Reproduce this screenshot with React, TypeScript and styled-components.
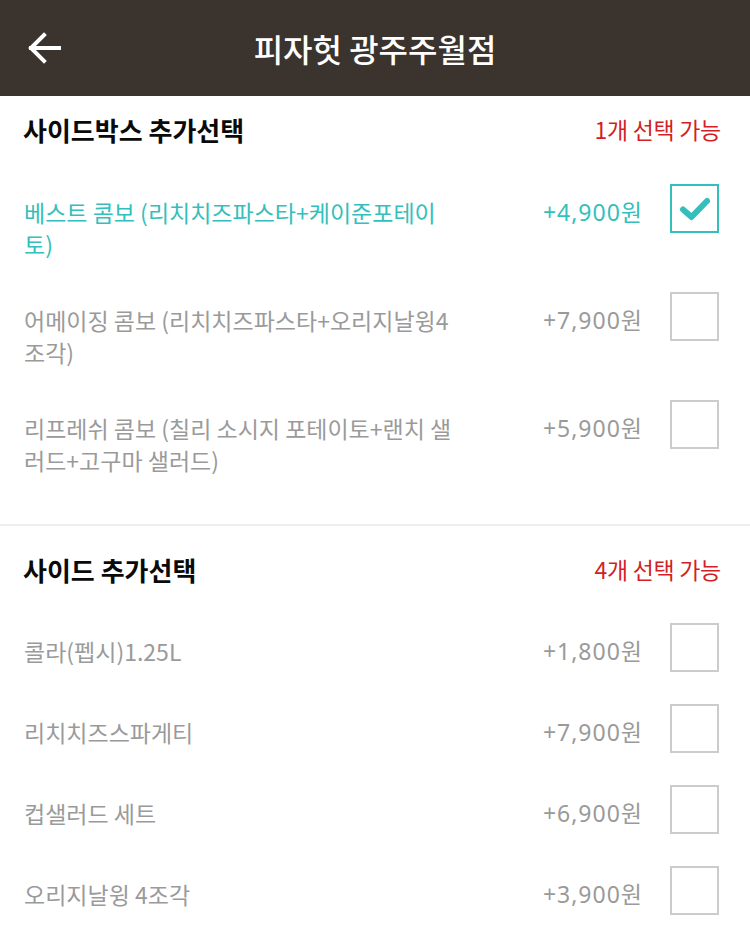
import React from "react";
import styled, {createGlobalStyle} from "styled-components";

const GlobalStyle = createGlobalStyle`
  html, body {
    margin: 0;
    padding: 0;
    background: #ffffff;
  }
  body {
    font-family: "Noto Sans CJK KR", "Noto Sans", sans-serif;
    -webkit-font-smoothing: antialiased;
  }
`;

const Page = styled.div`
  width: 750px;
  min-height: 945px;
  background: #ffffff;
`;

const TopBar = styled.header`
  height: 96px;
  background-color: #3b342e;
  display: flex;
  align-items: center;
  justify-content: center;
  position: relative;
`;

const BackButton = styled.button`
  position: absolute;
  left: 20px;
  top: 24px;
  width: 48px;
  height: 48px;
  padding: 0;
  border: none;
  background: transparent;
  display: flex;
  align-items: center;
  justify-content: center;
`;

const Title = styled.h1`
  margin: 0;
  color: #ffffff;
  font-size: 32px;
  font-weight: 500;
`;

const Section = styled.section<{$divided?: boolean}>`
  padding: ${(p) => (p.$divided ? "25px" : "15px")} 31px 48px 23px;
  border-top: ${(p) => (p.$divided ? "2px solid #eeeeee" : "none")};
  display: flex;
  flex-direction: column;
  gap: 32px;
`;

const SectionHeader = styled.div<{$tight?: boolean}>`
  display: flex;
  align-items: center;
  justify-content: space-between;
  height: 36px;
  margin-right: -2px;
  margin-bottom: ${(p) => (p.$tight ? "4px" : "5px")};
`;

const SectionTitle = styled.h2`
  margin: 0;
  font-size: 26px;
  font-weight: 700;
  color: #0a0a0a;
`;

const Limit = styled.span`
  font-size: 23px;
  color: #d21f26;
  letter-spacing: -0.3px;
`;

const Row = styled.div<{$selected?: boolean}>`
  display: flex;
  align-items: flex-start;
  padding-left: 1px;
  color: ${(p) => (p.$selected ? "#34bfbc" : "#9a9a9a")};
`;

const Name = styled.div`
  flex: 1;
  padding-top: 12px;
  font-size: 23px;
  line-height: 32px;
  white-space: pre-line;
`;

const Price = styled.div`
  padding-top: 12px;
  margin-right: 27px;
  font-size: 23px;
  line-height: 32px;
  letter-spacing: 1px;
  font-family: "Noto Sans", "Noto Sans CJK KR", sans-serif;
`;

const Check = styled.div<{$checked?: boolean}>`
  width: 49px;
  height: 49px;
  box-sizing: border-box;
  border: 2px solid ${(p) => (p.$checked ? "#34bfbc" : "#cccccc")};
  display: flex;
  align-items: center;
  justify-content: center;
  flex-shrink: 0;
`;

type Option = {name: string; price: string; checked?: boolean};

const boxOptions: Option[] = [
  {name: "베스트 콤보 (리치치즈파스타+케이준포테이\n토)", price: "+4,900원", checked: true},
  {name: "어메이징 콤보 (리치치즈파스타+오리지날윙4\n조각)", price: "+7,900원"},
  {name: "리프레쉬 콤보 (칠리 소시지 포테이토+랜치 샐\n러드+고구마 샐러드)", price: "+5,900원"},
];

const sideOptions: Option[] = [
  {name: "콜라(펩시)1.25L", price: "+1,800원"},
  {name: "리치치즈스파게티", price: "+7,900원"},
  {name: "컵샐러드 세트", price: "+6,900원"},
  {name: "오리지날윙 4조각", price: "+3,900원"},
];

function OptionRow({option}: {option: Option}) {
  return (
    <Row $selected={option.checked}>
      <Name>{option.name}</Name>
      <Price>{option.price}</Price>
      <Check $checked={option.checked}>
        {option.checked && (
          <svg width="32" height="26" viewBox="0 0 32 26">
            <path d="M4 13.5 L12.5 21 L28 5" fill="none" stroke="#34bfbc" strokeWidth="6"
                  strokeLinecap="round" strokeLinejoin="round"/>
          </svg>
        )}
      </Check>
    </Row>
  );
}

export default function App() {
  return (
    <Page>
      <GlobalStyle/>
      <TopBar>
        <BackButton aria-label="뒤로">
          <svg width="34" height="32" viewBox="0 0 34 32">
            <path d="M32 16 H4 M17 3 L4 16 L17 29" fill="none" stroke="#ffffff" strokeWidth="4"
                  strokeLinecap="square" strokeLinejoin="miter"/>
          </svg>
        </BackButton>
        <Title>피자헛 광주주월점</Title>
      </TopBar>
      <Section>
        <SectionHeader>
          <SectionTitle>사이드박스 추가선택</SectionTitle>
          <Limit>1개 선택 가능</Limit>
        </SectionHeader>
        {boxOptions.map((o) => <OptionRow key={o.name} option={o}/>)}
      </Section>
      <Section $divided>
        <SectionHeader $tight>
          <SectionTitle>사이드 추가선택</SectionTitle>
          <Limit>4개 선택 가능</Limit>
        </SectionHeader>
        {sideOptions.map((o) => <OptionRow key={o.name} option={o}/>)}
      </Section>
    </Page>
  );
}
